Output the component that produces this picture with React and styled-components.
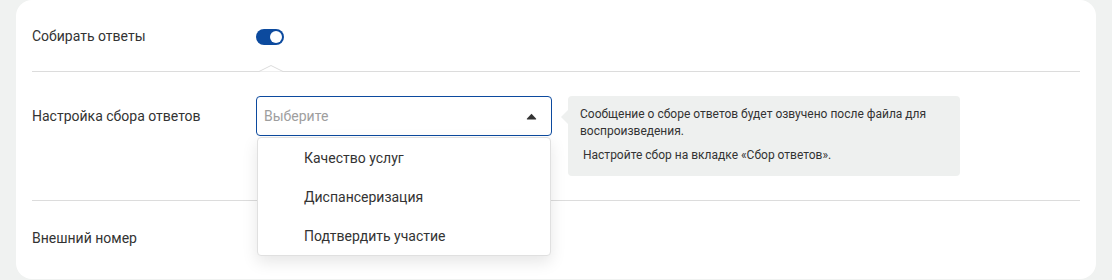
import React from "react";
import styled, { createGlobalStyle } from "styled-components";

const Global = createGlobalStyle`
  html, body { margin: 0; padding: 0; }
  body {
    background: #f0f2f1;
    font-family: Roboto, "Liberation Sans", Arial, sans-serif;
    color: #333333;
  }
`;

const Page = styled.div`
  padding: 0 16px;
  height: 280px;
  overflow: hidden;
`;

const Card = styled.div`
  background: #ffffff;
  border-radius: 16px;
  padding: 0 16px;
  height: 279px;
  box-sizing: border-box;
`;

const Row = styled.div`
  display: flex;
  align-items: flex-start;
  position: relative;
  box-sizing: border-box;
  height: ${(p) => p.$h}px;
  padding-top: ${(p) => p.$pt}px;
`;

const Label = styled.div`
  width: 224px;
  flex: none;
  font-size: 14px;
  line-height: ${(p) => p.$lh || 40}px;
  color: #333333;
`;

const Divider = styled.div`
  position: relative;
  height: 1px;
  background: #dcdcdc;
`;

const Notch = styled.svg`
  position: absolute;
  left: 227px;
  top: -6px;
  display: block;
`;

const Switch = styled.div`
  width: 28px;
  height: 16px;
  border-radius: 8px;
  background: #0c4a9e;
  position: relative;
  margin-top: 28px;
  &::after {
    content: "";
    position: absolute;
    top: 2px;
    right: 2px;
    width: 12px;
    height: 12px;
    border-radius: 50%;
    background: #ffffff;
  }
`;

const SelectWrap = styled.div`
  position: relative;
  width: 296px;
  flex: none;
`;

const SelectBox = styled.div`
  height: 40px;
  box-sizing: border-box;
  border: 1px solid #0c4a9e;
  border-radius: 4px;
  display: flex;
  align-items: center;
  justify-content: space-between;
  padding: 0 14px 0 7px;
  font-size: 14px;
  color: #9e9e9e;
`;

const Menu = styled.div`
  position: absolute;
  top: 41px;
  left: 1px;
  width: 294px;
  background: #ffffff;
  border: 1px solid #e0e0e0;
  border-radius: 4px;
  box-shadow: 0 6px 16px rgba(0, 0, 0, 0.1);
  z-index: 5;
  box-sizing: border-box;
`;

const MenuItem = styled.div`
  height: 39px;
  display: flex;
  align-items: center;
  padding-left: 46px;
  font-size: 14px;
  color: #333333;
`;

const Hint = styled.div`
  position: relative;
  margin-left: 16px;
  width: 392px;
  box-sizing: border-box;
  background: #eef0ef;
  border-radius: 4px;
  padding: 10px 12px 10px 12px;
  min-height: 80px;
  font-size: 12px;
  line-height: 17px;
  color: #333333;
  &::before {
    content: "";
    position: absolute;
    left: -7px;
    top: 14px;
    border-top: 7px solid transparent;
    border-bottom: 7px solid transparent;
    border-right: 7px solid #eef0ef;
  }
`;

const HintPara = styled.p`
  margin: 0 0 ${(p) => p.$mb || 0}px;
  white-space: pre-wrap;
`;

const Arrow = () => (
  <svg width="11" height="7" viewBox="0 0 11 7">
    <path
      d="M5.5 0.8 L10.2 5.8 Q10.4 6.4 9.8 6.4 L1.2 6.4 Q0.6 6.4 0.8 5.8 Z"
      fill="#333333"
    />
  </svg>
);

export default function App() {
  return (
    <Page>
      <Global />
      <Card>
        <Row $h={71} $pt={1}>
          <Label $lh={70}>Собирать ответы</Label>
          <Switch />
        </Row>
        <Divider>
          <Notch width="24" height="7" viewBox="0 0 24 7">
            <path d="M0 6.5 L12 0.5 L24 6.5 Z" fill="#ffffff" />
            <path d="M0 6.5 L12 0.5 L24 6.5" fill="none" stroke="#dcdcdc" strokeWidth="1" />
          </Notch>
        </Divider>
        <Row $h={128} $pt={24}>
          <Label>Настройка сбора ответов</Label>
          <SelectWrap>
            <SelectBox>
              <span>Выберите</span>
              <Arrow />
            </SelectBox>
            <Menu>
              <MenuItem>Качество услуг</MenuItem>
              <MenuItem>Диспансеризация</MenuItem>
              <MenuItem>Подтвердить участие</MenuItem>
            </Menu>
          </SelectWrap>
          <Hint>
            <HintPara $mb={7}>
              Сообщение о сборе ответов будет озвучено после файла для воспроизведения.
            </HintPara>
            <HintPara>{" Настройте сбор на вкладке «Сбор ответов»."}</HintPara>
          </Hint>
        </Row>
        <Divider />
        <Row $h={78} $pt={17}>
          <Label>Внешний номер</Label>
        </Row>
      </Card>
    </Page>
  );
}
